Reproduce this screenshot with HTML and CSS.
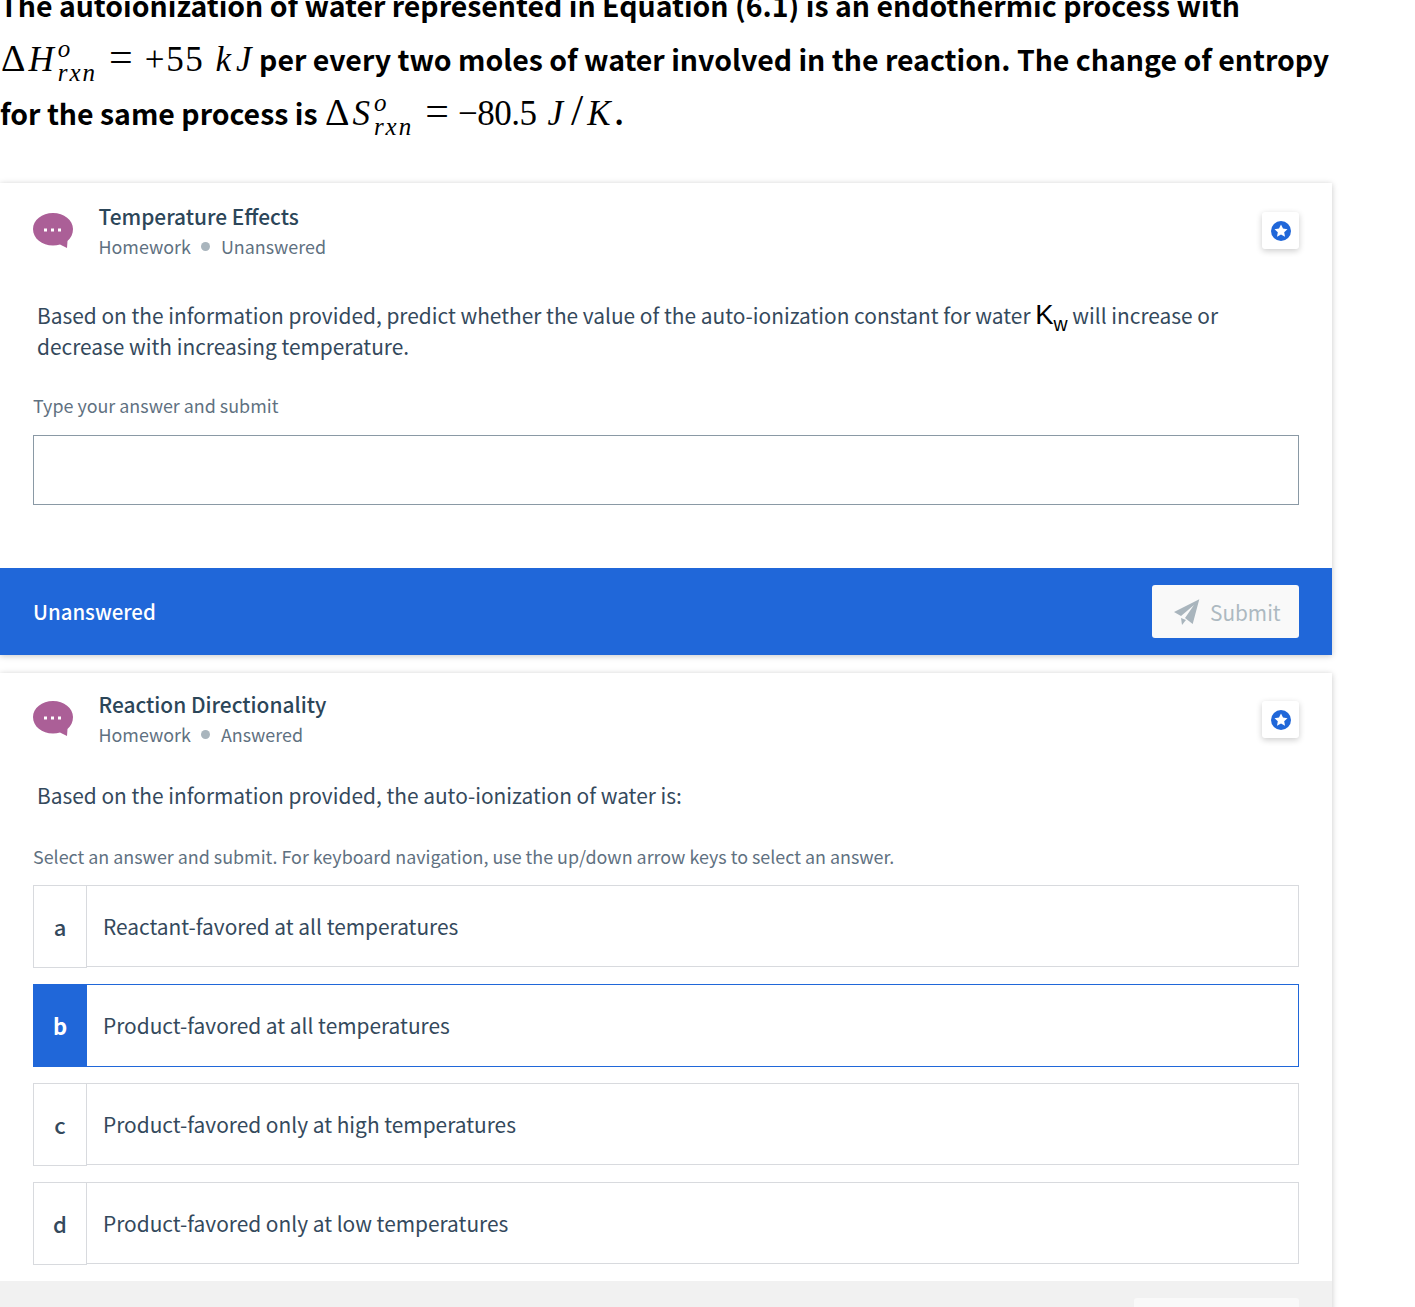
FILE: index.html
```html
<!DOCTYPE html>
<html lang="en">
<head>
    <meta charset="UTF-8">
    <meta name="viewport" content="width=device-width, initial-scale=1.0">
    <title>Homework</title>
    <link rel="stylesheet" href="styles.css">
</head>
<body>
    <div class="intro">
        <p class="intro-line">The autoionization of water represented in Equation (6.1) is an endothermic process with</p>
        <p class="intro-line">
            <span class="math"><span class="delta">Δ</span><i class="math-var">H</i><span class="scripts"><i>o</i><i class="script-sub">rxn</i></span><span class="math-eq">=</span><span class="math-num">+55</span><i class="math-unit math-unit-last">kJ</i></span>
            per every two moles of water involved in the reaction. The change of entropy
        </p>
        <p class="intro-line">
            for the same process is
            <span class="math"><span class="delta">Δ</span><i class="math-var">S</i><span class="scripts"><i>o</i><i class="script-sub">rxn</i></span><span class="math-eq">=</span><span class="math-num math-num-tight">−80.5</span><i class="math-unit">J</i><span class="math-slash">/</span><i class="math-end">K</i></span>.
        </p>
    </div>

    <section class="card card-first">
        <div class="card-head">
            <svg class="bubble" viewBox="0 0 40 36" width="40" height="36">
                <path d="M20 0C31 0 40 7 40 16C40 21 38 25 34.500 28L34 35L27 31.500C24.800 32.200 22.500 32.500 20 32.500C9 32.500 0 25.500 0 16C0 7 9 0 20 0Z" fill="#ab5f97"/>
                <rect x="11" y="15.500" width="3" height="3" fill="#fff"/>
                <rect x="18" y="15.500" width="3" height="3" fill="#fff"/>
                <rect x="25" y="15.500" width="3" height="3" fill="#fff"/>
            </svg>
            <div class="card-titles">
                <h2>Temperature Effects</h2>
                <div class="card-meta"><span>Homework</span><span class="dot"></span><span>Unanswered</span></div>
            </div>
            <button class="star-button">
                <svg viewBox="0 0 20 20" width="20" height="20">
                    <circle cx="10" cy="10" r="10" fill="#2067d9"/>
                    <path d="M10 3.500L12 7.600L16.500 8.200L13.200 11.300L14 15.800L10 13.600L6 15.800L6.800 11.300L3.500 8.200L8 7.600Z" fill="#fff"/>
                </svg>
            </button>
        </div>
        <div class="card-body">
            <p class="prompt">Based on the information provided, predict whether the value of the auto-ionization constant for water <span class="kw">K<sub>w</sub></span> will increase or decrease with increasing temperature.</p>
            <div class="hint">Type your answer and submit</div>
            <div class="answer-input"></div>
        </div>
        <div class="card-foot">
            <span class="foot-status">Unanswered</span>
            <button class="submit-button">
                <svg viewBox="0 0 26 26" width="26" height="26">
                    <path d="M25.300 0.300L0 13L7 17L20 6L11 19L18.700 25Z" fill="#a9b5bd"/>
                    <path d="M7 19L8 26L12 21Z" fill="#a9b5bd"/>
                </svg>
                Submit
            </button>
        </div>
    </section>

    <section class="card">
        <div class="card-head">
            <svg class="bubble" viewBox="0 0 40 36" width="40" height="36">
                <path d="M20 0C31 0 40 7 40 16C40 21 38 25 34.500 28L34 35L27 31.500C24.800 32.200 22.500 32.500 20 32.500C9 32.500 0 25.500 0 16C0 7 9 0 20 0Z" fill="#ab5f97"/>
                <rect x="11" y="15.500" width="3" height="3" fill="#fff"/>
                <rect x="18" y="15.500" width="3" height="3" fill="#fff"/>
                <rect x="25" y="15.500" width="3" height="3" fill="#fff"/>
            </svg>
            <div class="card-titles">
                <h2>Reaction Directionality</h2>
                <div class="card-meta"><span>Homework</span><span class="dot"></span><span>Answered</span></div>
            </div>
            <button class="star-button">
                <svg viewBox="0 0 20 20" width="20" height="20">
                    <circle cx="10" cy="10" r="10" fill="#2067d9"/>
                    <path d="M10 3.500L12 7.600L16.500 8.200L13.200 11.300L14 15.800L10 13.600L6 15.800L6.800 11.300L3.500 8.200L8 7.600Z" fill="#fff"/>
                </svg>
            </button>
        </div>
        <div class="card-body card-body-choices">
            <p class="prompt">Based on the information provided, the auto-ionization of water is:</p>
            <div class="hint">Select an answer and submit. For keyboard navigation, use the up/down arrow keys to select an answer.</div>
            <div class="choices">
                <div class="choice"><span class="choice-letter">a</span><span class="choice-text">Reactant-favored at all temperatures</span></div>
                <div class="choice selected"><span class="choice-letter">b</span><span class="choice-text">Product-favored at all temperatures</span></div>
                <div class="choice"><span class="choice-letter">c</span><span class="choice-text">Product-favored only at high temperatures</span></div>
                <div class="choice"><span class="choice-letter">d</span><span class="choice-text">Product-favored only at low temperatures</span></div>
            </div>
        </div>
        <div class="card-foot card-foot-grey">
            <button class="submit-button submit-wide"></button>
        </div>
    </section>
</body>
</html>
```

FILE: styles.css
```css
html, body {
    height: 100%;
    overflow: hidden;
}

body {
    margin: 0;
    background-color: #fff;
    font-family: "Noto Sans CJK SC", "Noto Sans", sans-serif;
    color: #34495c;
}

.intro {
    width: 1332px;
    margin-top: -22px;
}

.intro-line {
    margin: 0;
    height: 54px;
    line-height: 54px;
    font-size: 28.45px;
    font-weight: 700;
    color: #000;
    white-space: nowrap;
}

.math {
    font-family: "Liberation Serif", serif;
    font-size: 35px;
    font-weight: 400;
}

.delta {
    margin: 0 3px 0 1px;
    font-size: 38px;
    line-height: 0;
}

.math-var {
    letter-spacing: 1px;
}

.scripts {
    display: inline-flex;
    flex-direction: column;
    vertical-align: 14px;
    margin-left: 3px;
    font-size: 25px;
    line-height: 24px;
}

.script-sub {
    letter-spacing: 2px;
}

.math-eq {
    margin: 0 12px;
    font-size: 42px;
    line-height: 0;
}

.math-num {
    letter-spacing: 1.7px;
}

.math-num-tight {
    margin-left: -3px;
    letter-spacing: -0.5px;
}

.math-unit {
    margin-left: 11px;
    letter-spacing: 5px;
}

.math-unit-last {
    margin-right: -4px;
}

.math-slash {
    margin: 0 4px 0 3px;
    font-size: 44px;
    line-height: 0;
}

.math-end {
    margin-right: 4px;
}

.card {
    width: 1332px;
    background-color: #fff;
    box-shadow: 0 1px 6px rgba(0, 0, 0, 0.22);
    margin-top: 18px;
}

.card-first {
    margin-top: 43px;
}

.card-head {
    display: flex;
    align-items: flex-start;
    padding: 16px 33px 0;
}

.card-first .card-head {
    padding-top: 18px;
}

.bubble {
    margin: 12px 25.500px 0 0;
    flex-shrink: 0;
}

.card-titles {
    flex: 1;
}

h2 {
    margin: 0;
    padding-top: 1px;
    font-size: 20.9px;
    line-height: 29px;
    font-weight: 500;
    color: #2c4659;
}

.card-meta {
    display: flex;
    align-items: center;
    margin-top: 1px;
    font-size: 17.9px;
    line-height: 29px;
    color: #5f7181;
}

.dot {
    width: 9px;
    height: 9px;
    margin: 0 10.500px;
    border-radius: 50%;
    background-color: #a9b5bd;
}

.star-button {
    display: flex;
    align-items: center;
    justify-content: center;
    width: 37px;
    height: 37px;
    margin-top: 12px;
    padding: 0;
    border: none;
    border-radius: 3px;
    background-color: #fff;
    box-shadow: 0 2px 6px rgba(0, 0, 0, 0.2);
}

.card-first .star-button {
    margin-top: 11px;
}

.card-body {
    padding: 38px 33px 63px;
}

.card-body-choices {
    padding-top: 31px;
    padding-bottom: 16px;
}

.prompt {
    margin: 0 0 0 4px;
    font-size: 20.88px;
    line-height: 31px;
}

.kw {
    font-family: "Liberation Sans", sans-serif;
    font-size: 27.5px;
    color: #000;
}

.kw sub {
    font-size: 19.5px;
    line-height: 0;
}

.hint {
    margin-top: 29px;
    font-size: 17.9px;
    line-height: 29px;
    color: #5f7181;
}

.card-body-choices .hint {
    margin-top: 31px;
}

.answer-input {
    height: 68px;
    margin-top: 15px;
    border: 1px solid #8a99a5;
}

.choices {
    display: flex;
    flex-direction: column;
    gap: 16px;
    margin-top: 14px;
}

.choice {
    display: flex;
    align-items: flex-start;
    height: 83px;
}

.choice-letter {
    display: flex;
    align-items: center;
    justify-content: center;
    box-sizing: border-box;
    width: 54px;
    height: 83px;
    padding-bottom: 2px;
    border: 1px solid #d8dade;
    font-size: 22px;
    font-weight: 500;
}

.choice-text {
    flex: 1;
    display: flex;
    align-items: center;
    box-sizing: border-box;
    height: 82px;
    padding-left: 16px;
    border: 1px solid #d8dade;
    border-left: none;
    font-size: 20.88px;
}

.choice.selected .choice-letter {
    border-color: #2067d9;
    background-color: #2067d9;
    color: #fff;
    font-weight: 700;
}

.choice.selected .choice-text {
    height: 83px;
    padding-bottom: 1px;
    border-color: #2067d9;
}

.card-foot {
    display: flex;
    align-items: center;
    justify-content: space-between;
    height: 87px;
    padding: 0 33px;
    background-color: #2067d9;
}

.card-foot-grey {
    justify-content: flex-end;
    background-color: #f1f1f1;
}

.foot-status {
    margin-bottom: 1px;
    font-size: 20.4px;
    font-weight: 500;
    color: #fff;
}

.submit-button {
    display: flex;
    align-items: center;
    gap: 10px;
    box-sizing: border-box;
    width: 147px;
    height: 53px;
    padding: 0 0 0 22px;
    border: none;
    border-radius: 3px;
    background-color: #f9f9f9;
    font-family: inherit;
    font-size: 20.8px;
    color: #adb9c1;
}

.submit-wide {
    width: 165px;
}
```
